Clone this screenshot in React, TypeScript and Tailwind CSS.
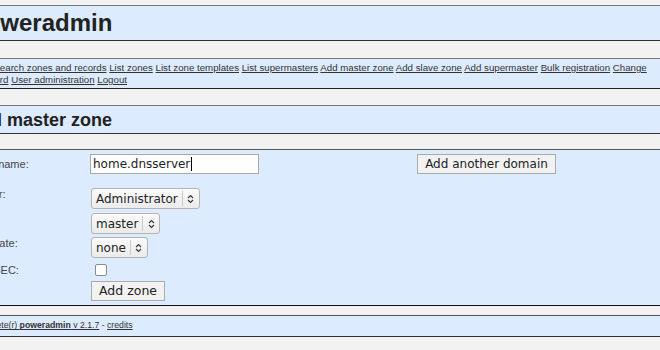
import React from 'react';

const menu = [
  'Index',
  'Search zones and records',
  'List zones',
  'List zone templates',
  'List supermasters',
  'Add master zone',
  'Add slave zone',
  'Add supermaster',
  'Bulk registration',
  'Change password',
  'User administration',
  'Logout',
];

const Updown: React.FC = () => (
  <svg width="7" height="10" viewBox="0 0 7 10" className="text-[#333]">
    <path d="M1 4 L3.5 1.5 L6 4 M1 6 L3.5 8.5 L6 6" fill="none" stroke="currentColor" strokeWidth="1.1" />
  </svg>
);

const FakeSelect: React.FC<{ value: string }> = ({ value }) => (
  <div className="flex h-[21px] items-center rounded-[3px] border border-[#b4b4b4] bg-gradient-to-b from-[#fafafa] to-[#ebebeb] pl-[4px] font-['DejaVu_Sans',sans-serif] text-[12px] text-[#222]">
    <span className="pr-[4px]">{value}</span>
    <span className="h-[15px] border-l border-[#c8c8c8]" />
    <span className="flex w-[16px] justify-center">
      <Updown />
    </span>
  </div>
);

const Row: React.FC<{ label: string; children: React.ReactNode; className?: string }> = ({ label, children, className }) => (
  <div className={`flex ${className ?? ''}`}>
    <div className="w-[120px] shrink-0 text-[11px] leading-[13px] text-[#444]">{label}</div>
    {children}
  </div>
);

const App: React.FC = () => {
  return (
    <div className="h-[350px] w-screen overflow-hidden bg-[#f2f2f2] font-['Liberation_Sans',Arial,sans-serif]">
      <div className="ml-[-40px] w-[780px] pt-[5px]">
        {/* Header */}
        <div className="flex h-[36px] items-center border-y border-t-[#777] border-b-[#333] bg-[#dcebfd] pl-[11px]">
          <h1 className="text-[24px] font-bold leading-none text-[#222]">poweradmin</h1>
        </div>

        {/* Menu */}
        <div className="mt-[17px] h-[31px] border-y border-t-[#777] border-b-[#222] bg-[#dcebfd] pl-[7px] pt-[3px]">
          <div className="w-[712px] text-[9.7px] leading-[12px] text-[#333]">
            {menu.map((m, i) => (
              <React.Fragment key={m}>
                <a href="#" className="underline">{m}</a>
                {i < menu.length - 1 ? ' ' : ''}
              </React.Fragment>
            ))}
          </div>
        </div>

        {/* Title */}
        <div className="mt-[16px] flex h-[29px] items-center border-y border-t-[#777] border-b-[#333] bg-[#dcebfd] pl-[7px]">
          <h2 className="text-[18px] font-bold leading-none text-[#222]">Add master zone</h2>
        </div>

        {/* Form */}
        <div className="mt-[15px] h-[157px] border-y border-t-[#555] border-b-[#111] bg-[#dcebfd] pl-[10px] pt-[4px]">
          <Row label="Zone name:" className="items-center">
            <div className="flex h-[20px] w-[169px] items-center border border-[#a8a8a8] bg-white pl-[2px] font-['DejaVu_Sans',sans-serif] text-[12px] text-[#222]">
              home.dnsserver<span className="ml-[1px] h-[14px] w-px bg-black" />
            </div>
            <button className="ml-[158px] h-[20px] w-[139px] border border-[#ababab] bg-[#f2f2f2] font-['DejaVu_Sans',sans-serif] text-[12px] text-[#222]">
              Add another domain
            </button>
          </Row>
          <Row label="Owner:" className="mt-[14px] items-start">
            <div className="flex pl-[1px]">
              <FakeSelect value="Administrator" />
            </div>
          </Row>
          <Row label="Type:" className="mt-[4px] items-start">
            <div className="flex pl-[1px]">
              <FakeSelect value="master" />
            </div>
          </Row>
          <Row label="Template:" className="mt-[3px] items-start">
            <div className="flex pl-[1px]">
              <FakeSelect value="none" />
            </div>
          </Row>
          <Row label="DNSSEC:" className="mt-[6px] items-start">
            <div className="ml-[5px] h-[12px] w-[12px] rounded-[2px] border border-[#8a8a8a] bg-white" />
          </Row>
          <Row label="" className="mt-[4px] items-start">
            <button className="ml-[1px] h-[20px] w-[74px] border border-[#ababab] bg-[#f2f2f2] font-['DejaVu_Sans',sans-serif] text-[12.5px] leading-none text-[#222]">
              Add zone
            </button>
          </Row>
        </div>

        {/* Footer */}
        <div className="mt-[9px] flex h-[22px] items-center border-y border-t-[#555] border-b-[#333] bg-[#dcebfd] pl-[6px] text-[8.7px] text-[#333]">
          <span>
            <a href="#" className="underline">
              a complete(r) <strong>poweradmin</strong> v 2.1.7
            </a>{' '}
            -{' '}
            <a href="#" className="underline">credits</a>
          </span>
        </div>
      </div>
    </div>
  );
};

export default App;
